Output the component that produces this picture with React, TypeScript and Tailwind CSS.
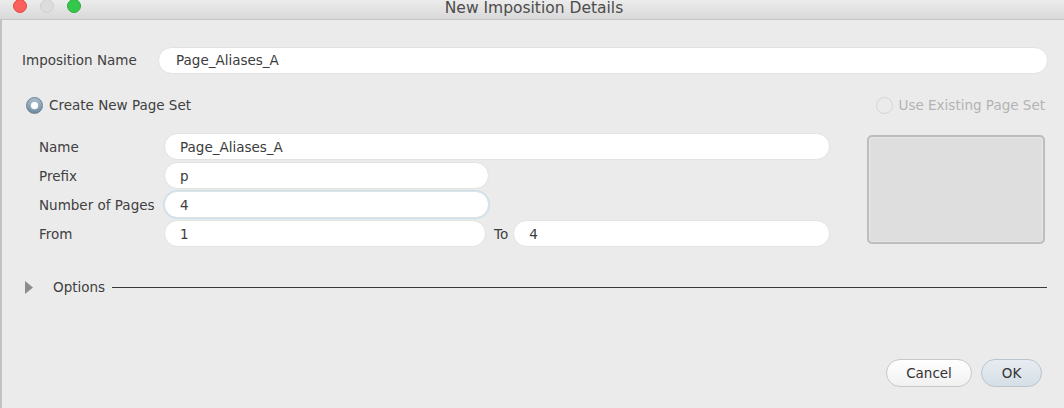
const font = { fontFamily: '"DejaVu Sans", "Liberation Sans", sans-serif' };

function Field({ value, className = "" }: { value: string; className?: string }) {
  return (
    <div
      className={
        "h-[27px] rounded-full bg-white border border-[#e2e2e2] flex items-center pl-[15px] text-[13.5px] text-[#3c3c3c] " +
        className
      }
    >
      {value}
    </div>
  );
}

function Label({ text }: { text: string }) {
  return <div className="w-[125px] text-[13.5px] text-[#404040] whitespace-nowrap">{text}</div>;
}

export default function App() {
  return (
    <div className="w-[1064px] h-[408px] bg-[#ebebeb] overflow-hidden flex flex-col" style={font}>
      {/* title bar */}
      <div className="h-[20px] grid grid-cols-[1fr_auto_1fr] bg-gradient-to-b from-[#ececec] to-[#d9d9d9] border-b border-[#c4c4c4]">
        <div className="flex gap-[13px] pl-[13px] -mt-[1px]">
          <div className="w-[14px] h-[14px] rounded-full bg-[#fc605c] border border-[#e5493f]" />
          <div className="w-[14px] h-[14px] rounded-full bg-[#dcdcdc] border border-[#cfcfcf]" />
          <div className="w-[14px] h-[14px] rounded-full bg-[#34c84a] border border-[#2aa93b]" />
        </div>
        <div className="text-[15.5px] text-[#4c4c4c] leading-[16px] pl-[4px]">New Imposition Details</div>
        <div />
      </div>

      {/* body */}
      <div className="flex-1 flex flex-col border-l-2 border-[#c2c2c2]">
        <div className="flex items-center pt-[27px] pl-[20px] pr-[16px]">
          <div className="w-[136px] text-[13.5px] text-[#404040]">Imposition Name</div>
          <Field value="Page_Aliases_A" className="flex-1 pl-[17px]" />
        </div>

        <div className="flex items-center justify-between mt-[21px] pl-[24px] pr-[19px]">
          <div className="flex items-center gap-[6px]">
            <div className="w-[17px] h-[17px] rounded-full bg-gradient-to-b from-[#a9bccb] to-[#6c8aa0] border border-[#6a8296] flex items-center justify-center">
              <div className="w-[7px] h-[7px] rounded-full bg-white shadow-[0_0_2px_#d8ecf8]" />
            </div>
            <span className="text-[13.5px] text-[#404040]">Create New Page Set</span>
          </div>
          <div className="flex items-center gap-[6px]">
            <div className="w-[17px] h-[17px] rounded-full border border-[#d4d4d4]" />
            <span className="text-[13.5px] text-[#b3b3b3]">Use Existing Page Set</span>
          </div>
        </div>

        <div className="flex mt-[18px] pl-[37px] pr-[19px]">
          <div className="w-[791px] flex flex-col gap-[2px]">
            <div className="flex items-center">
              <Label text="Name" />
              <Field value="Page_Aliases_A" className="flex-1" />
            </div>
            <div className="flex items-center">
              <Label text="Prefix" />
              <Field value="p" className="w-[325px]" />
            </div>
            <div className="flex items-center">
              <Label text="Number of Pages" />
              <Field value="4" className="w-[325px] border-[#a9d0e6] shadow-[0_0_0_1px_#c7e1ef]" />
            </div>
            <div className="flex items-center">
              <Label text="From" />
              <Field value="1" className="w-[322px]" />
              <span className="text-[13.5px] text-[#404040] ml-[8px] mr-[5px]">To</span>
              <Field value="4" className="flex-1" />
            </div>
          </div>
          <div className="flex-1 flex justify-end pt-[2px]">
            <div className="w-[178px] h-[109px] rounded-[5px] bg-[#dedede] border-2 border-[#bdbdbd] shadow-[inset_0_0_0_1px_#e6e6e6]" />
          </div>
        </div>

        <div className="flex items-center mt-[30px] pl-[22px] pr-[17px]">
          <svg width="10" height="15" viewBox="0 0 10 15">
            <path d="M1 1 L9 7.5 L1 14 Z" fill="#8c8c8c" />
          </svg>
          <span className="ml-[19px] text-[13.5px] text-[#404040]">Options</span>
          <div className="flex-1 ml-[7px] h-px bg-[#3a3a3a]" />
        </div>

        <div className="flex-1" />

        <div className="flex justify-end gap-[9px] pr-[22px] pb-[21px]">
          <div className="w-[86px] h-[28px] rounded-full bg-gradient-to-b from-[#ffffff] to-[#f1f1f1] border border-[#c8c8c8] flex items-center justify-center text-[13.5px] text-[#333]">
            Cancel
          </div>
          <div className="w-[61px] h-[28px] rounded-full bg-gradient-to-b from-[#e6ecf1] to-[#d6dfe6] border border-[#bcc4cb] flex items-center justify-center text-[13.5px] text-[#333]">
            OK
          </div>
        </div>
      </div>
    </div>
  );
}
